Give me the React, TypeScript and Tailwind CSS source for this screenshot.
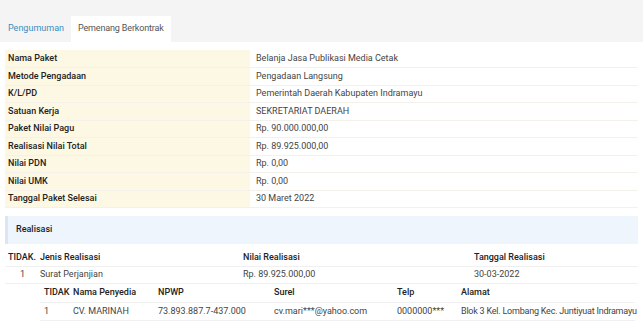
import React from 'react'

const INFO: [string, string][] = [
  ['Nama Paket', 'Belanja Jasa Publikasi Media Cetak'],
  ['Metode Pengadaan', 'Pengadaan Langsung'],
  ['K/L/PD', 'Pemerintah Daerah Kabupaten Indramayu'],
  ['Satuan Kerja', 'SEKRETARIAT DAERAH'],
  ['Paket Nilai Pagu', 'Rp. 90.000.000,00'],
  ['Realisasi Nilai Total', 'Rp. 89.925.000,00'],
  ['Nilai PDN', 'Rp. 0,00'],
  ['Nilai UMK', 'Rp. 0,00'],
  ['Tanggal Paket Selesai', '30 Maret 2022'],
]

export default function App() {
  return (
    <div className="w-[643px] h-[335px] overflow-hidden bg-white text-[9px] text-[#444]" style={{ fontFamily: 'Roboto, "Liberation Sans", sans-serif' }}>
      {/* tabs */}
      <div className="bg-[#f4f4f4] h-[42px] flex items-end pl-[3px]">
        <div className="h-[26px] px-[5px] flex items-center text-[#3c8dbc]">Pengumuman</div>
        <div className="h-[26px] ml-[2px] px-[7px] flex items-center bg-white text-[#555] tracking-[-0.15px]">Pemenang Berkontrak</div>
      </div>

      <div className="px-[5px] pt-[8px]">
        <table className="w-full border-collapse">
          <tbody>
            {INFO.map(([k, v]) => (
              <tr key={k} className="h-[17.5px] border-b border-[#f3f1ea]">
                <td className="w-[245px] bg-[#fcf8e3] pl-[3px] font-medium text-[#222]">{k}</td>
                <td className="pl-[6px]">{v}</td>
              </tr>
            ))}
          </tbody>
        </table>

        {/* realisasi panel */}
        <div className="mt-[8px] h-[28px] bg-[#eef5fc] border-l-[3px] border-[#dbe6f1] flex items-center pl-[8px] font-medium text-[#222]">
          Realisasi
        </div>

        <table className="w-full border-collapse mt-[5px] table-fixed">
          <colgroup>
            <col className="w-[35px]" />
            <col className="w-[203px]" />
            <col className="w-[231px]" />
            <col />
          </colgroup>
          <thead>
            <tr className="h-[17px] border-b border-[#f0f0f0] text-[#222]">
              <th className="text-left font-medium pl-[3px]">TIDAK.</th>
              <th className="text-left font-medium">Jenis Realisasi</th>
              <th className="text-left font-medium">Nilai Realisasi</th>
              <th className="text-left font-medium">Tanggal Realisasi</th>
            </tr>
          </thead>
          <tbody>
            <tr className="h-[17px] border-b border-[#f0f0f0]">
              <td className="text-center">1</td>
              <td>Surat Perjanjian</td>
              <td>Rp. 89.925.000,00</td>
              <td>30-03-2022</td>
            </tr>
            <tr>
              <td></td>
              <td colSpan={3}>
                <table className="w-[595px] border-collapse table-fixed">
                  <colgroup>
                    <col className="w-[33px]" />
                    <col className="w-[85px]" />
                    <col className="w-[116px]" />
                    <col className="w-[123px]" />
                    <col className="w-[64px]" />
                    <col />
                  </colgroup>
                  <thead>
                    <tr className="h-[19px] border-b border-[#f0f0f0] text-[#222]">
                      <th className="text-left font-medium pl-[4px]">TIDAK</th>
                      <th className="text-left font-medium">Nama Penyedia</th>
                      <th className="text-left font-medium">NPWP</th>
                      <th className="text-left font-medium">Surel</th>
                      <th className="text-left font-medium">Telp</th>
                      <th className="text-left font-medium">Alamat</th>
                    </tr>
                  </thead>
                  <tbody>
                    <tr className="h-[18px] border-b border-[#f0f0f0]">
                      <td className="pl-[4px]">1</td>
                      <td>CV. MARINAH</td>
                      <td>73.893.887.7-437.000</td>
                      <td>cv.mari***@yahoo.com</td>
                      <td>0000000***</td>
                      <td className="whitespace-nowrap tracking-[-0.22px]">Blok 3 Kel. Lombang Kec. Juntiyuat Indramayu</td>
                    </tr>
                  </tbody>
                </table>
              </td>
            </tr>
          </tbody>
        </table>
      </div>
    </div>
  )
}
